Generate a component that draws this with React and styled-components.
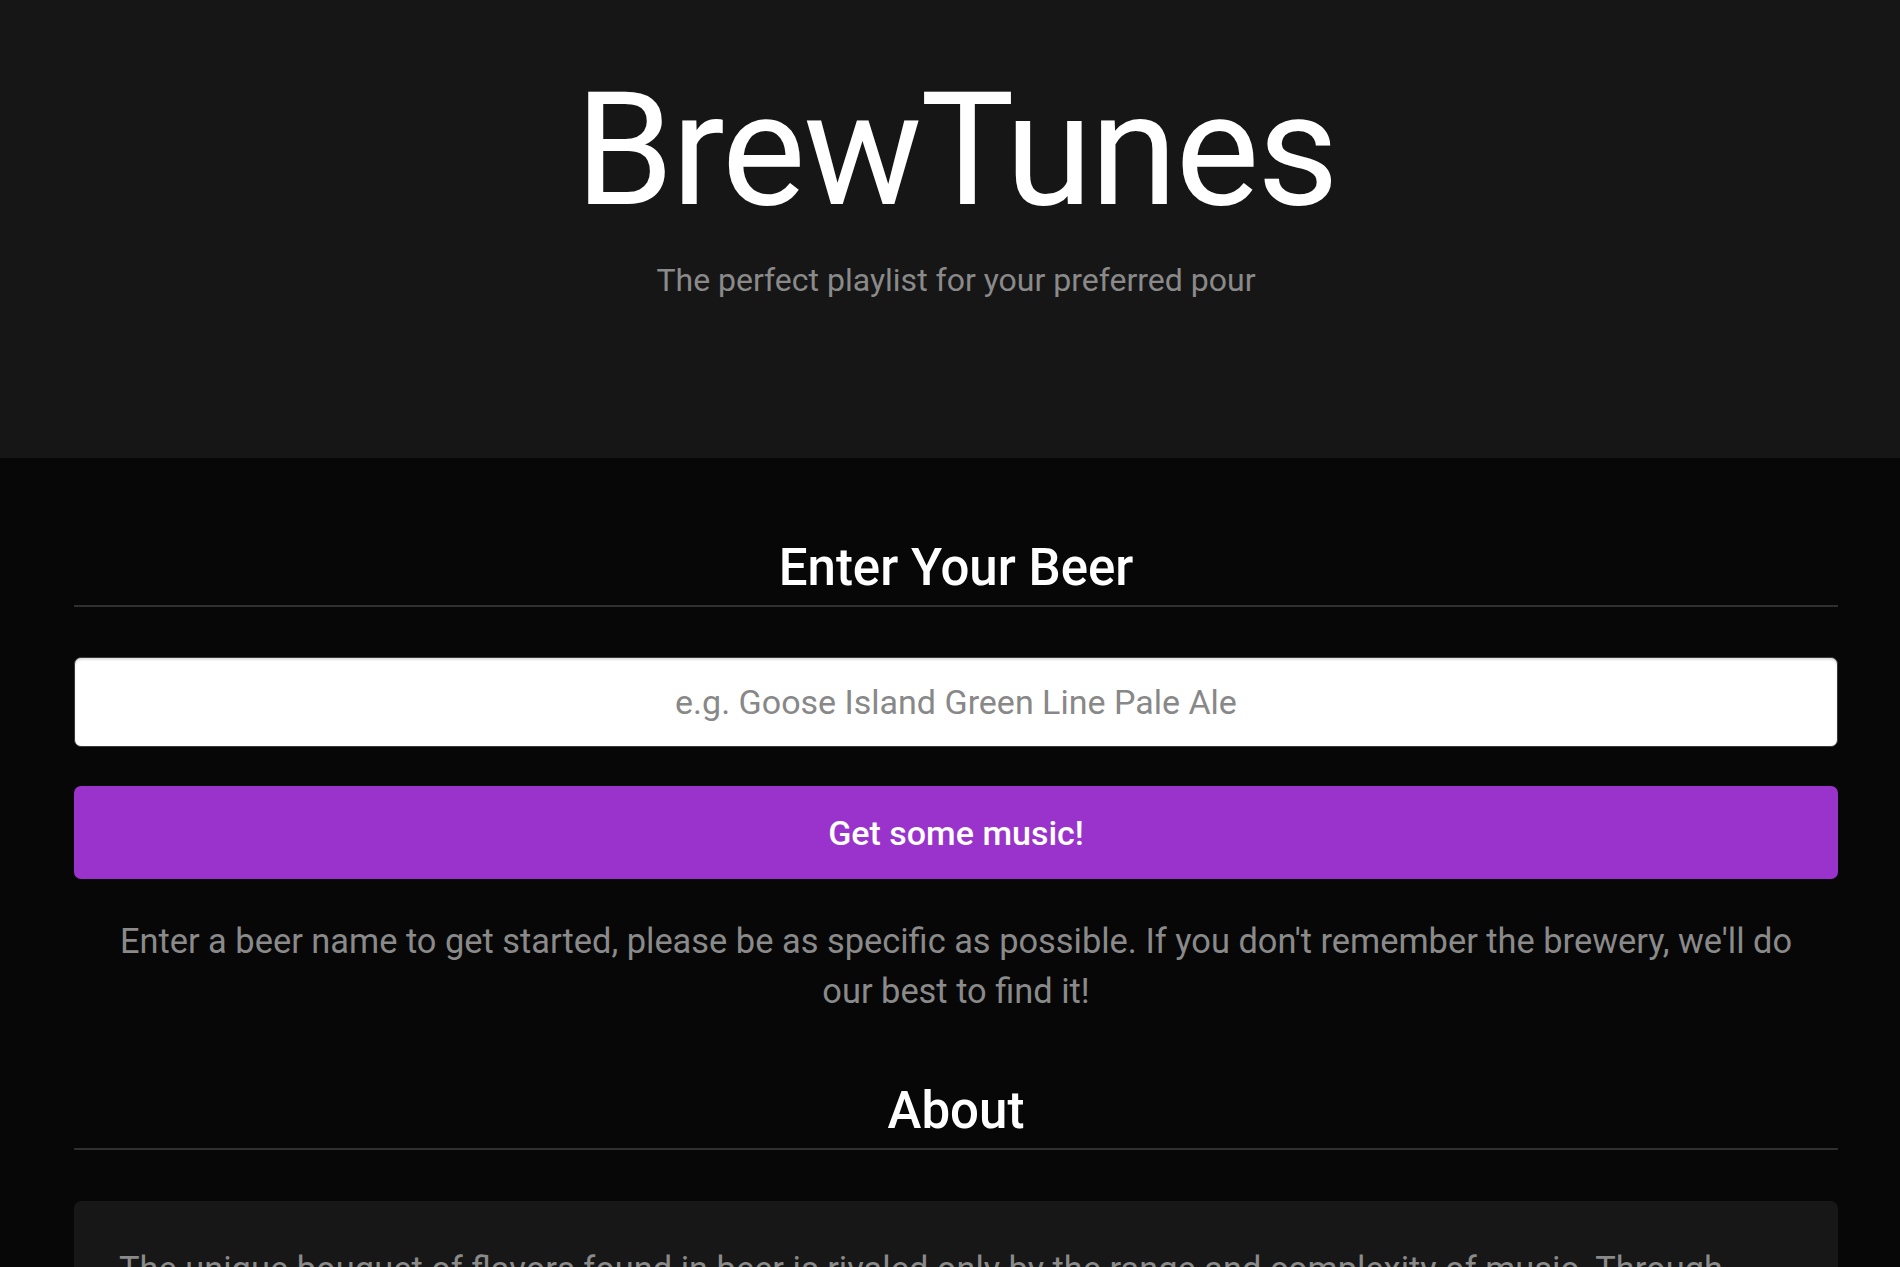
import { useState } from 'react'
import styled, { createGlobalStyle } from 'styled-components'

const GlobalStyle = createGlobalStyle`
  html, body {
    margin: 0;
    padding: 0;
    background: #070707;
    font-family: Roboto, "Liberation Sans", Arial, sans-serif;
  }
  * {
    box-sizing: border-box;
  }
`

const Header = styled.header`
  background: #161616;
  padding: 71px 0 154px;
`

const Container = styled.div`
  width: 1764px;
  margin: 0 62px 0 74px;
  text-align: center;
`

const Title = styled.h1`
  margin: 0;
  font-size: 158px;
  line-height: 158px;
  font-weight: 400;
  letter-spacing: -2px;
  color: #fff;
`

const Tagline = styled.p`
  margin: 27px 0 0;
  font-size: 32px;
  line-height: 48px;
  color: #8a8a8a;
`

const Main = styled.main`
  background: #070707;
  padding-top: 80px;
`

const SectionTitle = styled.h2`
  margin: ${props => props.$top || 0}px 0 0;
  padding-bottom: 8px;
  border-bottom: 2px solid #2f2f2f;
  font-size: 51px;
  line-height: 59px;
  font-weight: 500;
  color: #fff;
`

const BeerInput = styled.input`
  display: block;
  width: 100%;
  height: 90px;
  margin-top: 50px;
  border: 1px solid #3a3a3a;
  border-radius: 7px;
  background: #fff;
  box-shadow: inset 0 2px 2px rgba(0, 0, 0, 0.12);
  font-family: inherit;
  font-size: 34px;
  text-align: center;
  color: #333;
  outline: none;
  &::placeholder {
    color: #888;
  }
`

const SubmitButton = styled.button`
  display: block;
  width: 100%;
  height: 93px;
  margin-top: 39px;
  border: none;
  border-radius: 7px;
  background: #9933cc;
  font-family: inherit;
  font-size: 34px;
  font-weight: 500;
  color: #fff;
  cursor: pointer;
`

const HelpText = styled.p`
  margin: 37px 0 0;
  padding: 0 40px;
  font-size: 34.4px;
  line-height: 50px;
  color: #8a8a8a;
`

const AboutCard = styled.div`
  margin-top: 51px;
  padding: 43px 45px;
  border-radius: 7px;
  background: #171717;
  text-align: left;
`

const AboutText = styled.p`
  margin: 0;
  font-size: 34.4px;
  line-height: 50px;
  color: #8a8a8a;
`

export default function App() {
  const [beer, setBeer] = useState('')

  return (
    <>
      <GlobalStyle />
      <Header>
        <Container>
          <Title>BrewTunes</Title>
          <Tagline>The perfect playlist for your preferred pour</Tagline>
        </Container>
      </Header>
      <Main>
        <Container>
          <SectionTitle>Enter Your Beer</SectionTitle>
          <BeerInput
            value={beer}
            onChange={e => setBeer(e.target.value)}
            placeholder="e.g. Goose Island Green Line Pale Ale"
          />
          <SubmitButton>Get some music!</SubmitButton>
          <HelpText>
            Enter a beer name to get started, please be as specific as possible. If you don't remember the brewery, we'll do our best to find it!
          </HelpText>
          <SectionTitle $top={65}>About</SectionTitle>
          <AboutCard>
            <AboutText>
              The unique bouquet of flavors found in beer is rivaled only by the range and complexity of music. Through BrewTunes, we match the character of your beer with a playlist made to go with every sip.
            </AboutText>
          </AboutCard>
        </Container>
      </Main>
    </>
  )
}
